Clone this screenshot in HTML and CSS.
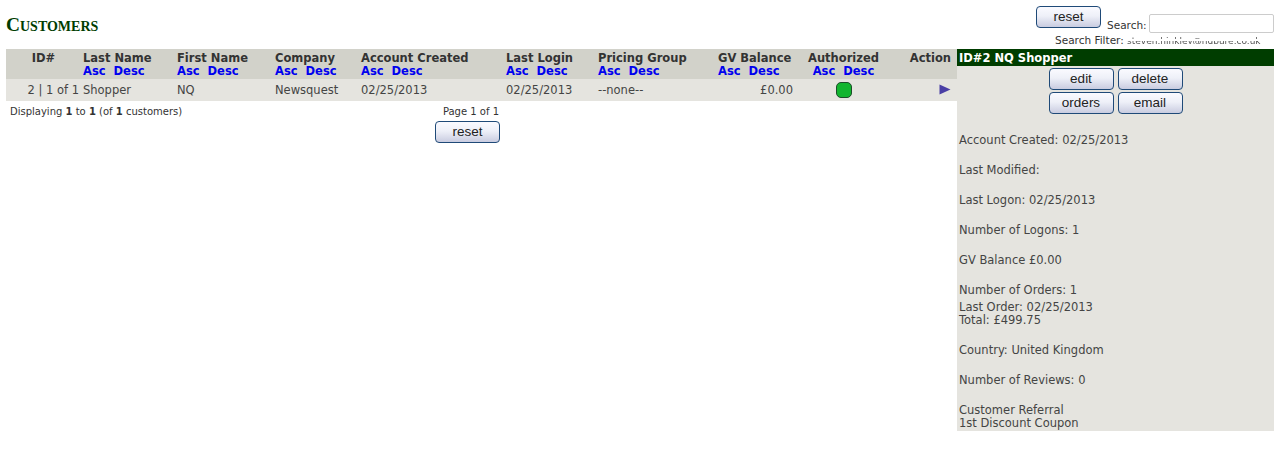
FILE: index.html
```html
<!DOCTYPE html>
<html lang="en">
<head>
<meta charset="utf-8">
<title>Customers</title>
<link rel="stylesheet" href="styles.css">
</head>
<body>
<header class="top">
  <h1 class="title">Customers</h1>
  <div class="tools">
    <div class="tools-row">
      <button class="btn" type="button">reset</button>
      <label class="search-label">Search:</label>
      <input class="search" type="text">
    </div>
    <div class="filter">Search Filter: <span class="filter-val">steven.hinkley@nqpure.co.uk</span></div>
  </div>
</header>
<main class="main">
  <section class="list">
    <table class="grid">
      <colgroup>
        <col class="c-id"><col class="c-last"><col class="c-first"><col class="c-co"><col class="c-acc"><col class="c-login"><col class="c-price"><col class="c-gv"><col class="c-auth"><col class="c-act">
      </colgroup>
      <thead>
        <tr>
          <th class="ctr">ID#</th>
          <th>Last Name<div class="sort"><a>Asc</a><a>Desc</a></div></th>
          <th>First Name<div class="sort"><a>Asc</a><a>Desc</a></div></th>
          <th>Company<div class="sort"><a>Asc</a><a>Desc</a></div></th>
          <th>Account Created<div class="sort"><a>Asc</a><a>Desc</a></div></th>
          <th>Last Login<div class="sort"><a>Asc</a><a>Desc</a></div></th>
          <th>Pricing Group<div class="sort"><a>Asc</a><a>Desc</a></div></th>
          <th>GV Balance<div class="sort"><a>Asc</a><a>Desc</a></div></th>
          <th class="ctr">Authorized<div class="sort"><a>Asc</a><a>Desc</a></div></th>
          <th class="rgt">Action</th>
        </tr>
      </thead>
      <tbody>
        <tr>
          <td class="rgt">2 | 1 of 1</td>
          <td>Shopper</td>
          <td>NQ</td>
          <td>Newsquest</td>
          <td>02/25/2013</td>
          <td>02/25/2013</td>
          <td>--none--</td>
          <td class="rgt">£0.00</td>
          <td class="ctr"><span class="status"></span></td>
          <td class="rgt"><svg class="arrow" width="12" height="11" viewBox="0 0 12 11"><path d="M0.5 0.5 L11.5 5.5 L0.5 10.5 Z" fill="#4a3fa5"/></svg></td>
        </tr>
      </tbody>
    </table>
    <div class="pager">
      <div class="count">Displaying <b>1</b> to <b>1</b> (of <b>1</b> customers)</div>
      <div class="pages">
        <div class="page-num">Page 1 of 1</div>
        <button class="btn" type="button">reset</button>
      </div>
    </div>
  </section>
  <aside class="panel">
    <div class="panel-head">ID#2 NQ Shopper</div>
    <div class="panel-actions">
      <div class="btn-row"><button class="btn" type="button">edit</button><button class="btn" type="button">delete</button></div>
      <div class="btn-row"><button class="btn" type="button">orders</button><button class="btn" type="button">email</button></div>
    </div>
    <div class="info">
      <p>Account Created: 02/25/2013</p>
      <p>Last Modified:</p>
      <p>Last Logon: 02/25/2013</p>
      <p>Number of Logons: 1</p>
      <p>GV Balance £0.00</p>
      <p class="tight">Number of Orders: 1</p>
      <p>Last Order: 02/25/2013<br>Total: £499.75</p>
      <p>Country: United Kingdom</p>
      <p>Number of Reviews: 0</p>
      <p>Customer Referral<br>1st Discount Coupon</p>
    </div>
  </aside>
</main>
</body>
</html>
```

FILE: styles.css
```css
* { box-sizing: border-box; }
html, body { margin: 0; background: #fff; }
body {
  font-family: "DejaVu Sans", Verdana, sans-serif;
  font-size: 11.5px;
  line-height: 13px;
  color: #333;
  width: 1278px;
  height: 456px;
  overflow: hidden;
}
.top {
  display: flex;
  justify-content: space-between;
  height: 49px;
  padding: 6px 4px 0 6px;
}
.title {
  margin: 9px 0 0;
  font-family: "Liberation Serif", "Times New Roman", serif;
  font-size: 19.4px;
  line-height: 20px;
  font-weight: bold;
  font-variant: small-caps;
  color: #003d00;
}
.tools { width: 238px; }
.tools-row { display: flex; align-items: flex-start; height: 27px; }
.btn {
  width: 65px;
  height: 22px;
  padding: 0;
  border: 1px solid #1f4a78;
  border-radius: 4px;
  background: linear-gradient(#fafaff 0%, #eef0f8 45%, #c9cce0 100%);
  font-family: "Liberation Sans", Arial, sans-serif;
  font-size: 13.5px;
  line-height: 18px;
  color: #222;
}
.search-label { margin: 13px auto 0 6px; font-size: 10.5px; line-height: 12px; color: #333; }
.search {
  width: 125px;
  height: 19px;
  margin-top: 8px;
  border: 1px solid #ccc;
  border-radius: 2px;
  background: #fff;
}
.filter {
  font-size: 10.5px;
  line-height: 12px;
  margin: 1px 0 0 19px;
  white-space: nowrap;
  width: 219px;
}
.filter-val {
  font-size: 9px;
  color: #555;
  -webkit-mask-image: linear-gradient(#000 0 35%, transparent 35% 55%, #000 55% 80%, transparent 80%);
  mask-image: linear-gradient(#000 0 35%, transparent 35% 55%, #000 55% 80%, transparent 80%);
}
.main { display: flex; padding-left: 6px; align-items: flex-start; }
.list { width: 951px; }
.grid {
  width: 951px;
  border-collapse: collapse;
  table-layout: fixed;
}
.c-id { width: 75px; }
.c-last { width: 94px; }
.c-first { width: 98px; }
.c-co { width: 86px; }
.c-acc { width: 145px; }
.c-login { width: 92px; }
.c-price { width: 120px; }
.c-gv { width: 79px; }
.c-auth { width: 97px; }
.c-act { width: 65px; }
th {
  height: 30px;
  padding: 3px 2px 0;
  background: #d2d2ca;
  text-align: left;
  vertical-align: top;
  font-weight: bold;
  color: #333;
}
td {
  height: 22px;
  padding: 1px 2px 0;
  background: #e5e4df;
  vertical-align: middle;
  color: #444;
}
th.ctr, td.ctr { text-align: center; }
th.rgt, td.rgt { text-align: right; }
th:last-child, td:last-child { padding-right: 6px; }
.sort { display: flex; gap: 8px; }
.ctr .sort { justify-content: center; }
.sort a { color: #0000ee; }
.status {
  display: block;
  width: 16px;
  height: 16px;
  margin: -1px auto 0;
  border: 1px solid #1d4d2a;
  border-radius: 5px;
  background: #12b52f;
}
.arrow { display: block; margin: -2px 0 0 auto; }
.pager { display: flex; padding-top: 4px; }
.count { width: 429px; padding-left: 4px; font-size: 10px; line-height: 13px; }
.pages { width: 65px; font-size: 10px; line-height: 13px; }
.page-num { padding-right: 1px; text-align: right; white-space: nowrap; }
.pages .btn { display: block; margin-top: 3px; }
.panel {
  width: 317px;
  height: 382px;
  background: #e5e4df;
}
.panel-head {
  height: 17px;
  padding-left: 2px;
  background: #003d00;
  color: #fff;
  font-weight: bold;
  line-height: 19px;
}
.panel-actions {
  display: flex;
  flex-direction: column;
  align-items: center;
  gap: 2px;
  padding-top: 2px;
}
.btn-row { display: flex; gap: 4px; }
.info { padding: 20px 2px 0; color: #444; }
.info p { margin: 0 0 17px; }
.info p.tight { margin-bottom: 4px; }
```
